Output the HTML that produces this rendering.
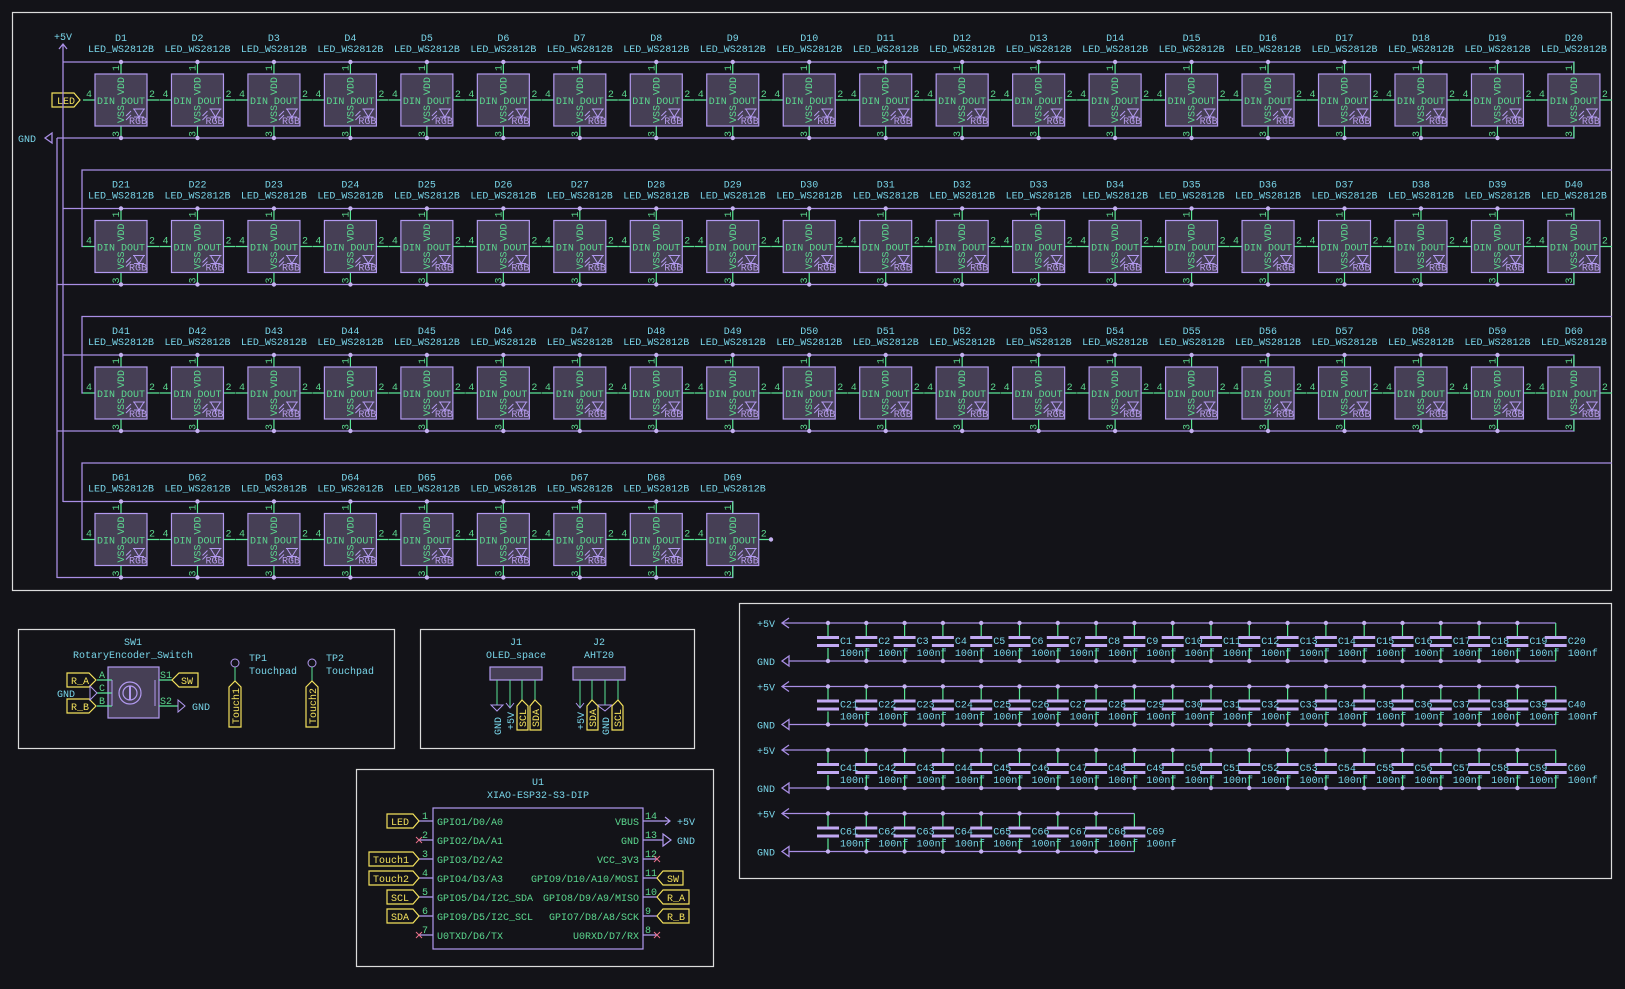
<!DOCTYPE html>
<html><head><meta charset="utf-8">
<style>
html,body{margin:0;padding:0;background:#131318;}
svg{display:block;}
text{font-family:"Liberation Mono",monospace;font-size:10px;}
.c{fill:#79d6ea}.g{fill:#5cd88f}.w{fill:#dfe0e0}.y{fill:#f3e15c}.p{fill:#b59ae8}
</style></head><body>
<svg id="s" width="1625" height="989" viewBox="0 0 1625 989" xmlns="http://www.w3.org/2000/svg">
<rect width="1625" height="989" fill="#131318"/>
<g fill="none" stroke="#dcdcdc" stroke-width="1.2">
<rect x="12.5" y="12.5" width="1599" height="578"/>
<rect x="18.5" y="629.5" width="376" height="119"/>
<rect x="420.5" y="629.5" width="274" height="119"/>
<rect x="356.5" y="769.5" width="357" height="197"/>
<rect x="739.5" y="603.5" width="872" height="275"/>
</g>
<g id="gen"></g>
<text x="54" y="40" class="c">+5V</text>
<text x="18" y="142" class="c">GND</text>
<path d="M52 93 H74 L80 100 L74 107 H52 Z" fill="none" stroke="#f3e15c" stroke-width="1.2"/>
<text x="57" y="104" class="y">LED</text>
<path d="M59 49 L63 44 L67 49 M63 44 V502" fill="none" stroke="#a98ee4" stroke-width="1.3"/>
<path d="M57 138 V578 M45 138 L52 133 V143 Z" fill="none" stroke="#a98ee4" stroke-width="1.3"/>

<text x="133" y="645" class="c" text-anchor="middle">SW1</text>
<text x="133" y="658" class="c" text-anchor="middle">RotaryEncoder_Switch</text>
<rect x="108" y="667" width="51" height="51" fill="#463f55" stroke="#b29af0" stroke-width="1.2"/>
<circle cx="130" cy="693" r="11" fill="none" stroke="#b29af0" stroke-width="1.2"/>
<circle cx="130" cy="693" r="7" fill="none" stroke="#b29af0" stroke-width="1.2"/>
<line x1="130" y1="686" x2="130" y2="700" stroke="#b29af0" stroke-width="2"/>
<path d="M97 680 H112 M97 693 H112 M97 706 H112 M159 680 H172 M159 706 H178" stroke="#5ae696" stroke-width="1.2"/>
<path d="M112 680 V706 M155 680 V706" stroke="#b29af0" fill="none"/>
<text x="99" y="678" class="g">A</text><text x="99" y="691" class="g">C</text><text x="99" y="704" class="g">B</text>
<text x="160" y="678" class="g">S1</text><text x="160" y="704" class="g">S2</text>
<path d="M67 673 H89 L96 680 L89 687 H67 Z M67 699 H89 L96 706 L89 713 H67 Z" fill="none" stroke="#f3e15c" stroke-width="1.2"/>
<text x="71" y="684" class="y">R_A</text><text x="71" y="710" class="y">R_B</text>
<path d="M97 693 L90 686 V700 Z" fill="none" stroke="#b29af0"/>
<text x="57" y="697" class="c">GND</text>
<path d="M172 680 L179 673 H198 V687 H179 Z" fill="none" stroke="#f3e15c" stroke-width="1.2"/>
<text x="181" y="684" class="y">SW</text>
<path d="M178 700 V712 L185 706 Z" fill="none" stroke="#b29af0"/>
<text x="192" y="710" class="c">GND</text>
<circle cx="235" cy="663" r="4" fill="none" stroke="#b29af0"/>
<circle cx="312" cy="663" r="4" fill="none" stroke="#b29af0"/>
<path d="M235 667 V681 M312 667 V681" stroke="#5ae696"/>
<path d="M229 687 L235 681 L241 687 V727 H229 Z M306 687 L312 681 L318 687 V727 H306 Z" fill="none" stroke="#f3e15c" stroke-width="1.2"/>
<text transform="translate(239,724) rotate(-90)" class="y">Touch1</text>
<text transform="translate(316,724) rotate(-90)" class="y">Touch2</text>
<text x="249" y="661" class="c">TP1</text><text x="249" y="674" class="c">Touchpad</text>
<text x="326" y="661" class="c">TP2</text><text x="326" y="674" class="c">Touchpad</text>

<text x="516" y="645" class="c" text-anchor="middle">J1</text>
<text x="516" y="658" class="c" text-anchor="middle">OLED_space</text>
<text x="599" y="645" class="c" text-anchor="middle">J2</text>
<text x="599" y="658" class="c" text-anchor="middle">AHT20</text>
<rect x="490" y="667" width="52" height="13" fill="#463f55" stroke="#b29af0" stroke-width="1.2"/>
<rect x="573" y="667" width="52" height="13" fill="#463f55" stroke="#b29af0" stroke-width="1.2"/>
<path d="M497 680 V705 M510 680 V707 M522 680 V700 M535 680 V700 M580 680 V707 M592 680 V700 M605 680 V705 M618 680 V700" stroke="#5ae696"/>
<path d="M491 705 H503 L497 711 Z M597 705 H612 L605 711 Z" fill="none" stroke="#b29af0"/>
<path d="M506 703 L510 708 L514 703 M576 703 L580 708 L584 703" fill="none" stroke="#b29af0"/>
<path d="M517 706 L522 700 L528 706 V730 H517 Z M530 706 L535 700 L541 706 V730 H530 Z M587 706 L592 700 L598 706 V730 H587 Z M612 706 L618 700 L623 706 V730 H612 Z" fill="none" stroke="#f3e15c" stroke-width="1.2"/>
<text transform="translate(526,727) rotate(-90)" class="y" font-size="9">SCL</text>
<text transform="translate(539,727) rotate(-90)" class="y" font-size="9">SDA</text>
<text transform="translate(596,727) rotate(-90)" class="y" font-size="9">SDA</text>
<text transform="translate(621,727) rotate(-90)" class="y" font-size="9">SCL</text>
<text transform="translate(501,735) rotate(-90)" class="c" font-size="9">GND</text>
<text transform="translate(514,730) rotate(-90)" class="c" font-size="9">+5V</text>
<text transform="translate(584,730) rotate(-90)" class="c" font-size="9">+5V</text>
<text transform="translate(609,735) rotate(-90)" class="c" font-size="9">GND</text>

<text x="538" y="785" class="c" text-anchor="middle">U1</text>
<text x="538" y="798" class="c" text-anchor="middle">XIAO-ESP32-S3-DIP</text>
<rect x="433" y="808" width="210" height="141" fill="none" stroke="#b29af0" stroke-width="1.2"/>
<g id="u1"></g>
</svg>
<script>
var s=document.getElementById('gen'),h='';
var PU='#a98ee4',GR='#5ae696',BS='#b29af0';
function L(d,c,w){h+='<path d="'+d+'" stroke="'+c+'" stroke-width="'+(w||1.2)+'" fill="none"/>';}
function T(x,y,t,cl,ex){h+='<text x="'+x+'" y="'+y+'" class="'+cl+'" '+(ex||'')+'>'+t+'</text>';}
function R(x,y,t,cl,fs){h+='<text transform="translate('+x+','+y+') rotate(-90)" class="'+cl+'"'+(fs?' font-size="'+fs+'"':'')+'>'+t+'</text>';}
function dot(x,y){h+='<circle cx="'+x+'" cy="'+y+'" r="2.2" fill="#c4b0f0"/>';}
var rows=[100,246.5,393,539.5],n=1;
for(var r=0;r<4;r++){
 var y=rows[r],cnt=r<3?20:9;
 var lastcx=95+(cnt-1)*76.47+26;
 L('M63 '+(y-38)+' H'+lastcx+' V'+(y-26),PU,1.3);
 L('M57 '+(y+38)+' H'+lastcx+' V'+(y+26),PU,1.3);
 if(r>0){L('M1612 '+(y-76.5)+' H82 V'+y+' H83',PU,1.3);}
 for(var i=0;i<cnt;i++){
  var x=95+i*76.47,cx=x+26;
  L('M'+cx+' '+(y-38)+' V'+(y-26)+' M'+cx+' '+(y+26)+' V'+(y+38)+' M'+(x-12)+' '+y+' H'+x+' M'+(x+52)+' '+y+' H'+(x+64),GR);
  if(i<cnt-1){dot(cx,y-38);dot(cx,y+38);}
  h+='<rect x="'+x+'" y="'+(y-26)+'" width="52" height="52" fill="#463f55" stroke="'+BS+'" stroke-width="1.2"/>';
  T(cx,y-59,'D'+n,'c','text-anchor="middle"');
  T(cx,y-48,'LED_WS2812B','c','text-anchor="middle"');
  T(x-9,y-3,'4','g','font-size="9"');T(x+54,y-3,'2','g','font-size="9"');
  R(cx-2,y-29,'1','g',9);R(cx-2,y+37,'3','g',9);
  T(x+2,y+4,'DIN','g','font-size="9.5"');T(x+50,y+4,'DOUT','g','font-size="9.5" text-anchor="end"');
  R(cx+3,y-5,'VDD','g',9.5);R(cx+3,y+23,'VSS','g',9.5);
  L('M'+(x+38)+' '+(y+9)+' H'+(x+50)+' M'+(x+39)+' '+(y+9)+' L'+(x+44)+' '+(y+17)+' L'+(x+49)+' '+(y+9)+' M'+(x+39)+' '+(y+17)+' H'+(x+49)+' M'+(x+44)+' '+(y+17)+' V'+(y+21)+' M'+(x+36)+' '+(y+11)+' L'+(x+31)+' '+(y+16)+' M'+(x+36)+' '+(y+15)+' L'+(x+31)+' '+(y+20),BS,1);
  T(x+34,y+24,'RGB','p','font-size="6"');
  n++;
 }
}
dot(771,539.5);
var crow=[623,686.5,750,813.5],cn=1;
for(var r=0;r<4;r++){
 var y=crow[r],cnt=r<3?20:9,last=828+(cnt-1)*38.3;
 T(757,y+4,'+5V','c');T(757,y+42,'GND','c');
 L('M789 '+(y-5)+' L782 '+y+' L789 '+(y+5)+' M782 '+y+' H'+last,PU,1.3);
 L('M782 '+(y+38)+' L789 '+(y+33)+' V'+(y+43)+' Z M789 '+(y+38)+' H'+last,PU,1.3);
 for(var i=0;i<cnt;i++){
  var cx=828+i*38.3;
  L('M'+cx+' '+y+' V'+(y+14)+' M'+cx+' '+(y+25)+' V'+(y+38),GR);
  h+='<rect x="'+(cx-11)+'" y="'+(y+13)+'" width="22" height="3" fill="#c1a8f2"/><rect x="'+(cx-11)+'" y="'+(y+21)+'" width="22" height="3" fill="#c1a8f2"/>';
  if(i<cnt-1){dot(cx,y);dot(cx,y+38);}
  T(cx+12,y+21,'C'+cn,'c');T(cx+12,y+33,'100nf','c');
  cn++;
 }
}
s.innerHTML=h;h='';
var ys=[821,840,859,878,897,916,935];
var ln=['GPIO1/D0/A0','GPIO2/DA/A1','GPIO3/D2/A2','GPIO4/D3/A3','GPIO5/D4/I2C_SDA','GPIO9/D5/I2C_SCL','U0TXD/D6/TX'];
var rn=['VBUS','GND','VCC_3V3','GPIO9/D10/A10/MOSI','GPIO8/D9/A9/MISO','GPIO7/D8/A8/SCK','U0RXD/D7/RX'];
var ll=['LED','','Touch1','Touch2','SCL','SDA',''];
var rl=['','','','SW','R_A','R_B',''];
for(var i=0;i<7;i++){
 var y=ys[i];
 L('M419 '+y+' H433 M643 '+y+' H657',BS);
 T(437,y+4,ln[i],'g');T(639,y+4,rn[i],'g','text-anchor="end"');
 T(422,y-2,''+(i+1),'g','font-size="9"');T(645,y-2,''+(14-i),'g','font-size="9"');
 if(ll[i]){var w=ll[i].length*6+8;L('M'+(413-w)+' '+(y-7)+' H413 L419 '+y+' L413 '+(y+7)+' H'+(413-w)+' Z','#f3e15c');T(417-w,y+4,ll[i],'y');}
 else L('M416 '+(y-3)+' l6 6 m0 -6 l-6 6','#e8708a',1);
 if(rl[i]){var w=rl[i].length*6+8;L('M657 '+y+' L663 '+(y-7)+' H'+(663+w)+' V'+(y+7)+' H663 Z','#f3e15c');T(667,y+4,rl[i],'y');}
}
L('M657 821 H670 M665 817 L670 821 L665 825',BS);T(677,825,'+5V','c');
L('M657 840 H663 M663 834 V846 L671 840 Z',BS);T(677,844,'GND','c');
L('M654 856 l6 6 m0 -6 l-6 6 M654 932 l6 6 m0 -6 l-6 6','#e8708a',1);
document.getElementById('u1').innerHTML=h;
</script>
</body></html>
